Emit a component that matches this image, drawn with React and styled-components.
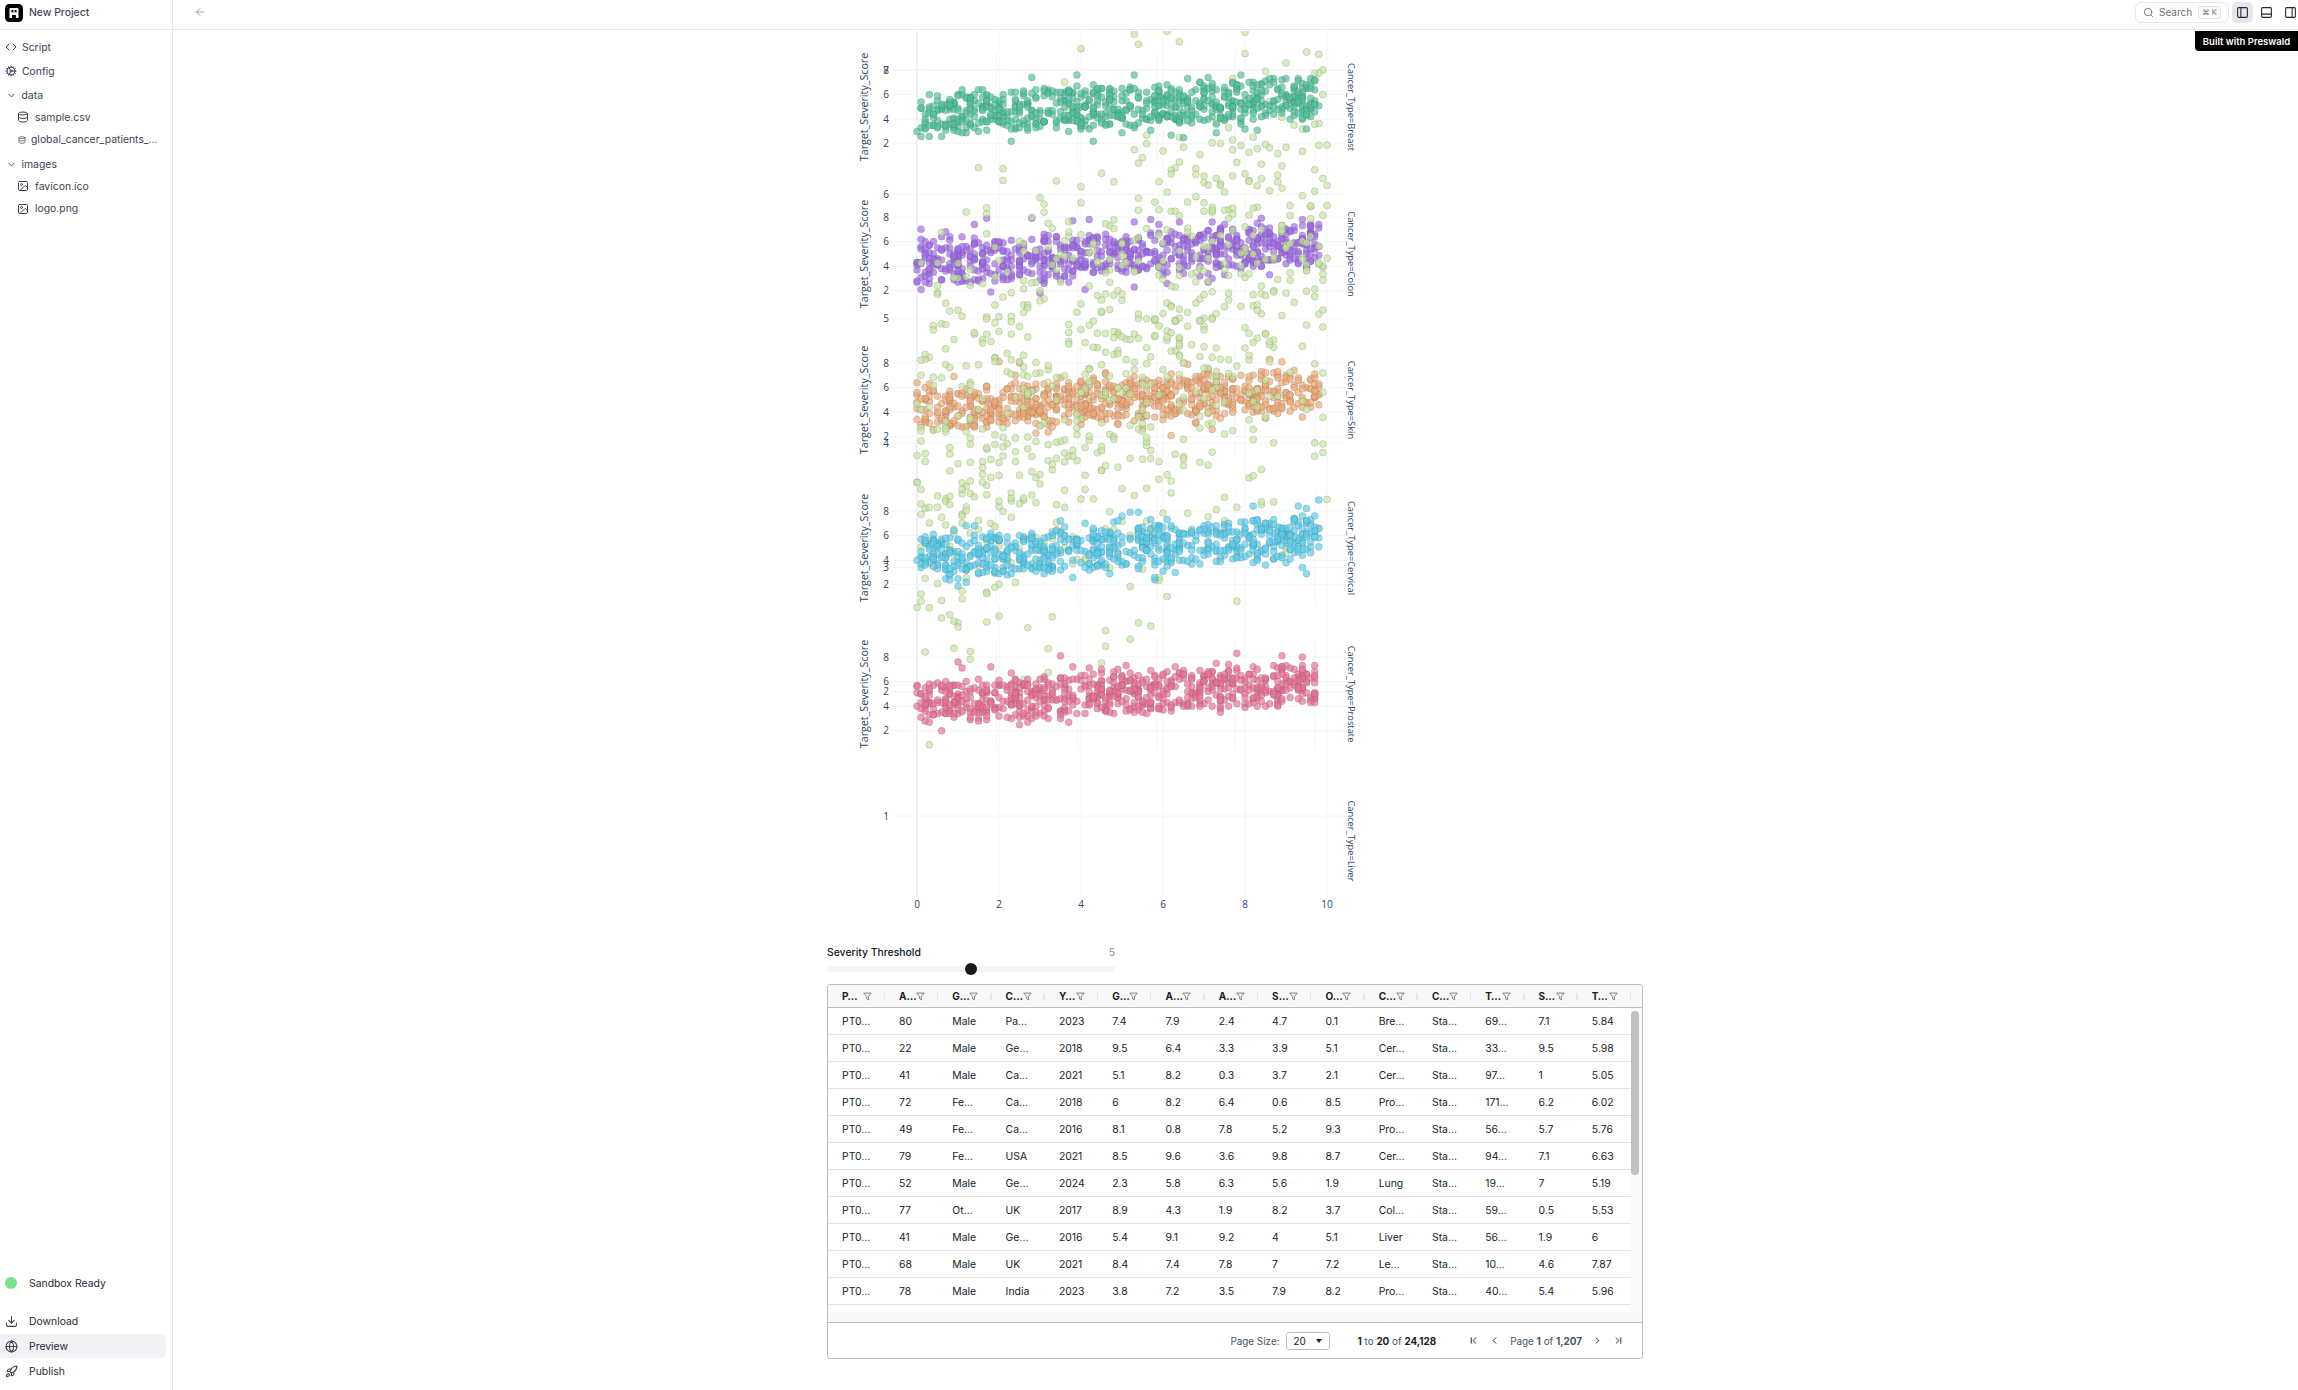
import React, { useMemo } from 'react';
import styled, { createGlobalStyle } from 'styled-components';
import {
  ArrowLeft,
  ChevronDown,
  ChevronFirst,
  ChevronLast,
  ChevronLeft,
  ChevronRight,
  Code,
  Cog,
  Database,
  Download,
  Globe,
  Image as ImageIcon,
  PanelBottom,
  PanelLeft,
  PanelRight,
  Rocket,
  Search,
} from 'lucide-react';

const FONT = 'Inter, "Liberation Sans", sans-serif';
const PLOT_FONT = '"Open Sans", "Liberation Sans", sans-serif';

const GlobalStyle = createGlobalStyle`
  html, body {
    margin: 0;
    padding: 0;
    background: #fff;
    font-family: ${FONT};
    color: #111827;
  }
`;

// chart --------------------------------------------------------------------

const CHART_TOP = 31;
const CHART_LEFT = 827;
const PANEL_PX = 12.3;
const OVERLAY_PX = 124.3;

const panels = [
  { name: 'Breast', y8: 70, top: 52, color: '#4fc098' },
  { name: 'Colon', y8: 217, top: 198, color: '#a268e6' },
  { name: 'Skin', y8: 363, top: 345, color: '#f3a873' },
  { name: 'Cervical', y8: 511, top: 492, color: '#5ccbeb' },
  { name: 'Prostate', y8: 657, top: 639, color: '#ec6f94' },
];

const px = x => x - CHART_LEFT;
const py = y => y - CHART_TOP;

const makeRandom = seed => {
  let s = seed;
  return () => {
    s = (s + 0x6d2b79f5) | 0;
    let t = Math.imul(s ^ (s >>> 15), 1 | s);
    t = (t + Math.imul(t ^ (t >>> 7), 61 | t)) ^ t;
    return ((t ^ (t >>> 14)) >>> 0) / 4294967296;
  };
};

const gauss = rnd => {
  const u = Math.max(rnd(), 1e-6);
  return Math.sqrt(-2 * Math.log(u)) * Math.cos(2 * Math.PI * rnd());
};

const bandPoints = (panel, index) => {
  const rnd = makeRandom(101 + index * 37);
  const pts = [];
  for (let i = 0; i < 700; i += 1) {
    const x = Math.round(rnd() * 98) / 10;
    // part flat spread, part bell, so the band edges stay loose
    const spread = rnd() < 0.6 ? (rnd() - 0.5) * 3.3 : gauss(rnd) * 1.2;
    let value = 4.2 + x * 0.17 + spread;
    value = Math.round(value * 10) / 10;
    if (value < 1.8 || value > 9) continue;
    pts.push({ cx: 917 + x * 41, cy: panel.y8 + (8 - value) * PANEL_PX });
  }
  return pts;
};

const overlayPoints = () => {
  const rnd = makeRandom(4242);
  const pts = [];
  for (let i = 0; i < 880; i += 1) {
    const x = Math.round(rnd() * 100) / 10;
    const value = 3.8 + x * 0.19 + gauss(rnd) * 1.0;
    if (value < 1.55 || value > 7.33) continue;
    pts.push({ cx: 917 + x * 41, cy: 816 - (value - 1) * OVERLAY_PX });
  }
  return pts;
};

const ChartWrap = styled.div`
  width: 550px;
  height: 900px;
  margin-bottom: 14px;
`;

const PlotSvg = styled.svg`
  display: block;
`;

const TickText = styled.text`
  font-family: ${PLOT_FONT};
  font-size: 10px;
  fill: #2a3f5f;
`;

const AxisTitle = styled.text`
  font-family: ${PLOT_FONT};
  font-size: 10.7px;
  fill: #2a3f5f;
`;

const FacetTitle = styled.text`
  font-family: ${PLOT_FONT};
  font-size: 9.3px;
  fill: #2a3f5f;
`;

const Dots = ({ points, color }) => (
  <g>
    {points.map((p, i) => (
      <circle
        key={i}
        cx={px(p.cx)}
        cy={py(p.cy)}
        r="3.5"
        fill={color}
        fillOpacity="0.68"
        stroke="#2f4f4f"
        strokeOpacity="0.45"
        strokeWidth="0.4"
      />
    ))}
  </g>
);

const Chart = () => {
  const layers = useMemo(() => {
    const byName = {};
    panels.forEach((p, i) => {
      byName[p.name] = bandPoints(p, i);
    });
    return { byName, overlay: overlayPoints() };
  }, []);

  const colorOf = name => panels.find(p => p.name === name).color;
  const overlayTicks = [7, 6, 5, 4, 3, 2, 1];
  const mainX = [0, 2, 4, 6, 8, 10];
  const panelX = [996, 1078, 1157, 1235, 1315];

  return (
    <ChartWrap>
      <PlotSvg width="550" height="900">
        {/* vertical grid */}
        {mainX.map(v => (
          <line
            key={v}
            x1={px(917 + v * 41)}
            x2={px(917 + v * 41)}
            y1="0"
            y2={py(897)}
            stroke={v === 0 ? '#ebf0f8' : '#f1f4f9'}
            strokeWidth={v === 0 ? 2 : 1}
          />
        ))}
        {panels.map(panel => (
          <g key={panel.name}>
            {panelX.map(x => (
              <line key={x} x1={px(x)} x2={px(x)} y1={py(panel.top)} y2={py(panel.top + 112)} stroke="#f1f4f9" />
            ))}
            {[8, 6, 4, 2].map(t => {
              const y = py(panel.y8 + (8 - t) * PANEL_PX);
              return (
                <g key={t}>
                  <line x1={px(892)} x2={px(1345)} y1={y} y2={y} stroke="#f1f4f9" />
                  <TickText x={px(889)} y={y + 3.5} textAnchor="end">{t}</TickText>
                </g>
              );
            })}
            <AxisTitle
              transform={`translate(${px(868)} ${py(panel.y8 + 37)}) rotate(-90)`}
              textAnchor="middle"
            >
              Target_Severity_Score
            </AxisTitle>
            <FacetTitle
              transform={`translate(${px(1348)} ${py(panel.y8 + 37)}) rotate(90)`}
              textAnchor="middle"
            >
              {`Cancer_Type=${panel.name}`}
            </FacetTitle>
          </g>
        ))}
        {overlayTicks.map(t => {
          const y = py(816 - (t - 1) * OVERLAY_PX);
          return (
            <g key={t}>
              <line x1={px(892)} x2={px(1345)} y1={y} y2={y} stroke="#f1f4f9" />
              <TickText x={px(889)} y={y + 3.5} textAnchor="end">{t}</TickText>
            </g>
          );
        })}
        <FacetTitle
          transform={`translate(${px(1348)} ${py(841)}) rotate(90)`}
          textAnchor="middle"
        >
          Cancer_Type=Liver
        </FacetTitle>
        {mainX.map(v => (
          <TickText key={v} x={px(917 + v * 41)} y={py(908)} textAnchor="middle">{v}</TickText>
        ))}

        <Dots points={layers.byName.Skin} color={colorOf('Skin')} />
        <Dots points={layers.byName.Colon} color={colorOf('Colon')} />
        <Dots points={layers.overlay} color="#c9e59c" />
        <Dots points={layers.byName.Cervical} color={colorOf('Cervical')} />
        <Dots points={layers.byName.Prostate} color={colorOf('Prostate')} />
        <Dots points={layers.byName.Breast} color={colorOf('Breast')} />
      </PlotSvg>
    </ChartWrap>
  );
};

// table data ---------------------------------------------------------------

const headers = ['P…', 'A…', 'G…', 'C…', 'Y…', 'G…', 'A…', 'A…', 'S…', 'O…', 'C…', 'C…', 'T…', 'S…', 'T…'];

const rows = [
  ['PT0…', '80', 'Male', 'Pa…', '2023', '7.4', '7.9', '2.4', '4.7', '0.1', 'Bre…', 'Sta…', '69…', '7.1', '5.84'],
  ['PT0…', '22', 'Male', 'Ge…', '2018', '9.5', '6.4', '3.3', '3.9', '5.1', 'Cer…', 'Sta…', '33…', '9.5', '5.98'],
  ['PT0…', '41', 'Male', 'Ca…', '2021', '5.1', '8.2', '0.3', '3.7', '2.1', 'Cer…', 'Sta…', '97…', '1', '5.05'],
  ['PT0…', '72', 'Fe…', 'Ca…', '2018', '6', '8.2', '6.4', '0.6', '8.5', 'Pro…', 'Sta…', '171…', '6.2', '6.02'],
  ['PT0…', '49', 'Fe…', 'Ca…', '2016', '8.1', '0.8', '7.8', '5.2', '9.3', 'Pro…', 'Sta…', '56…', '5.7', '5.76'],
  ['PT0…', '79', 'Fe…', 'USA', '2021', '8.5', '9.6', '3.6', '9.8', '8.7', 'Cer…', 'Sta…', '94…', '7.1', '6.63'],
  ['PT0…', '52', 'Male', 'Ge…', '2024', '2.3', '5.8', '6.3', '5.6', '1.9', 'Lung', 'Sta…', '19…', '7', '5.19'],
  ['PT0…', '77', 'Ot…', 'UK', '2017', '8.9', '4.3', '1.9', '8.2', '3.7', 'Col…', 'Sta…', '59…', '0.5', '5.53'],
  ['PT0…', '41', 'Male', 'Ge…', '2016', '5.4', '9.1', '9.2', '4', '5.1', 'Liver', 'Sta…', '56…', '1.9', '6'],
  ['PT0…', '68', 'Male', 'UK', '2021', '8.4', '7.4', '7.8', '7', '7.2', 'Le…', 'Sta…', '10…', '4.6', '7.87'],
  ['PT0…', '78', 'Male', 'India', '2023', '3.8', '7.2', '3.5', '7.9', '8.2', 'Pro…', 'Sta…', '40…', '5.4', '5.96'],
];

const COLUMNS = '57px repeat(14, 53.3px)';

// layout -------------------------------------------------------------------

const Page = styled.div`
  display: flex;
  width: 2298px;
  height: 1390px;
  overflow: hidden;
  position: relative;
`;

const Sidebar = styled.aside`
  flex: none;
  width: 172px;
  height: 100%;
  border-right: 1px solid #e5e7eb;
  display: flex;
  flex-direction: column;
  font-size: 10.4px;
`;

const Brand = styled.div`
  height: 30px;
  flex: none;
  display: flex;
  align-items: center;
  gap: 6px;
  padding: 0 5px 4px;
  box-sizing: border-box;
  border-bottom: 1px solid #e5e7eb;
  color: #3f4a5f;
  font-weight: 500;
`;

const Tree = styled.nav`
  padding-top: 5px;
`;

const TreeRow = styled.div`
  height: ${({ $h }) => $h || 24}px;
  display: flex;
  align-items: center;
  gap: ${({ $gap }) => $gap ?? 5}px;
  padding-left: ${({ $indent }) => $indent || 5}px;
  color: #3a4253;
  white-space: nowrap;
  svg {
    flex: none;
  }
`;

const SidebarFoot = styled.div`
  margin-top: auto;
  padding-bottom: 7px;
`;

const Status = styled.div`
  display: flex;
  align-items: center;
  gap: 12px;
  padding-left: 5px;
  height: 24px;
  margin-bottom: 14px;
  color: #1f2937;
`;

const StatusDot = styled.span`
  width: 12px;
  height: 12px;
  border-radius: 50%;
  background: #7de08a;
`;

const FootRow = styled.div`
  display: flex;
  align-items: center;
  gap: 11px;
  width: 166px;
  height: 24px;
  margin-top: 1px;
  padding-left: 5px;
  box-sizing: border-box;
  border-radius: 0 6px 6px 0;
  color: #1f2937;
  background: ${({ $active }) => ($active ? '#f1f2f5' : 'transparent')};
  svg {
    flex: none;
    color: #374151;
  }
`;

const Main = styled.main`
  flex: 1;
  min-width: 0;
  display: flex;
  flex-direction: column;
`;

const TopBar = styled.header`
  flex: none;
  height: 30px;
  box-sizing: border-box;
  border-bottom: 1px solid #e5e7eb;
  display: flex;
  align-items: center;
  justify-content: space-between;
  padding: 0 0 5px 21px;
`;

const TopActions = styled.div`
  display: flex;
  align-items: center;
  gap: 3px;
  margin-right: -3px;
`;

const SearchBox = styled.div`
  width: 94px;
  height: 21px;
  box-sizing: border-box;
  border: 1px solid #e5e7eb;
  border-radius: 6px;
  display: flex;
  align-items: center;
  gap: 5px;
  padding-left: 7px;
  font-size: 10px;
  color: #6b7280;
`;

const Kbd = styled.span`
  margin-left: 1px;
  padding: 1px 3px;
  border: 1px solid #e5e7eb;
  border-radius: 3px;
  background: #f9fafb;
  font-size: 7.5px;
  color: #6b7280;
`;

const PanelButton = styled.button`
  width: 21px;
  height: 21px;
  padding: 0;
  border: none;
  border-radius: 5px;
  display: flex;
  align-items: center;
  justify-content: center;
  color: #1f2937;
  background: ${({ $active }) => ($active ? '#e5e7eb' : 'transparent')};
`;

const Badge = styled.div`
  position: absolute;
  top: 31px;
  right: 0;
  width: 103px;
  height: 20px;
  display: flex;
  align-items: center;
  justify-content: center;
  border-bottom-left-radius: 4px;
  background: #000;
  color: #fff;
  font-size: 9.5px;
  font-weight: 600;
`;

const Content = styled.div`
  width: 816px;
  margin-left: 654px;
  padding-top: 1px;
`;

const SliderHead = styled.div`
  width: 288px;
  display: flex;
  justify-content: space-between;
  align-items: center;
  height: 14px;
  font-size: 10.4px;
`;

const SliderLabel = styled.span`
  font-weight: 500;
  color: #111827;
`;

const SliderValue = styled.span`
  color: #8b8f97;
`;

const SliderTrack = styled.div`
  position: relative;
  width: 288px;
  height: 6px;
  margin: 7px 0 12px;
  border-radius: 3px;
  background: #f3f4f6;
`;

const SliderThumb = styled.span`
  position: absolute;
  top: -3px;
  left: 138px;
  width: 12px;
  height: 12px;
  border-radius: 50%;
  background: #17181c;
`;

const Grid = styled.div`
  position: relative;
  width: 816px;
  height: 375px;
  box-sizing: border-box;
  border: 1px solid #babfc7;
  border-radius: 3px;
  display: flex;
  flex-direction: column;
  font-size: 10.4px;
  color: #181d1f;
`;

const HeadRow = styled.div`
  flex: none;
  height: 22px;
  display: grid;
  grid-template-columns: ${COLUMNS};
  border-bottom: 1px solid #babfc7;
  background: #f8f8f8;
  border-radius: 3px 3px 0 0;
`;

const HeadCell = styled.div`
  position: relative;
  display: flex;
  align-items: center;
  gap: 2px;
  padding-left: 14px;
  font-size: 10px;
  font-weight: 700;
  color: #181d1f;
  &::after {
    content: '';
    position: absolute;
    right: 0;
    top: 8px;
    width: 1.5px;
    height: 7px;
    background: #e3e6ec;
  }
`;

const HeadLabel = styled.span`
  flex: none;
  width: ${({ $w }) => $w}px;
  white-space: nowrap;
`;

const Body = styled.div`
  position: relative;
  flex: 1;
  min-height: 0;
  background: linear-gradient(#fff, #fff) top / 100% 304px no-repeat, #f8f8f8;
`;

const BodyRow = styled.div`
  height: 27px;
  box-sizing: border-box;
  width: 803px;
  display: grid;
  grid-template-columns: ${COLUMNS};
  align-items: center;
  border-bottom: 1px solid #dde2eb;
`;

const Cell = styled.div`
  padding-left: 14px;
  white-space: nowrap;
`;

const ScrollTrack = styled.div`
  position: absolute;
  top: 0;
  right: 0;
  width: 11px;
  height: 304px;
  background: #fafafa;
`;

const ScrollThumb = styled.div`
  position: absolute;
  top: 3px;
  left: 0;
  width: 8px;
  height: 164px;
  border-radius: 4px;
  background: #c1c1c1;
`;

const Footer = styled.div`
  flex: none;
  height: 36px;
  box-sizing: border-box;
  border-top: 1px solid #babfc7;
  display: flex;
  align-items: center;
  justify-content: flex-end;
  padding-right: 18px;
  font-size: 9.9px;
  color: #4b5563;
`;

const SizeSelect = styled.div`
  width: 44px;
  height: 18px;
  box-sizing: border-box;
  margin: 0 28px 0 6px;
  padding: 0 7px;
  border: 1px solid #babfc7;
  border-radius: 3px;
  display: flex;
  align-items: center;
  justify-content: space-between;
  color: #181d1f;
`;

const Caret = styled.span`
  width: 0;
  height: 0;
  border-left: 3.5px solid transparent;
  border-right: 3.5px solid transparent;
  border-top: 4px solid #181d1f;
`;

const Summary = styled.div`
  margin-right: 32px;
  b {
    font-weight: 700;
    color: #181d1f;
  }
`;

const Pager = styled.div`
  display: flex;
  align-items: center;
  gap: 10px;
  color: #181d1f;
  svg {
    flex: none;
  }
  b {
    font-weight: 700;
  }
`;

const PageLabel = styled.span`
  color: #4b5563;
`;

const FilterIcon = () => (
  <svg width="9" height="9" viewBox="0 0 10 10" fill="none" stroke="#68686e" strokeWidth="0.9">
    <path d="M0.8 1.2h8.4L6 5v3.8L4 7.6V5z" strokeLinejoin="round" />
  </svg>
);

const Logo = () => (
  <svg width="18" height="18" viewBox="0 0 18 18">
    <rect width="18" height="18" rx="4.5" fill="#000" />
    <path d="M4.5 14V5.2C4.5 4.5 5 4 5.7 4h6.6c.7 0 1.2.5 1.2 1.2V14h-2.6v-3H7.1v3z" fill="#fff" />
    <rect x="6.4" y="6" width="2" height="2.4" fill="#000" />
    <rect x="9.6" y="6" width="2" height="2.4" fill="#000" />
  </svg>
);

const App = () => (
  <Page>
    <GlobalStyle />
    <Sidebar>
      <Brand>
        <Logo />
        New Project
      </Brand>
      <Tree>
        <TreeRow><Code size={12} />Script</TreeRow>
        <TreeRow><Cog size={12} />Config</TreeRow>
        <TreeRow><ChevronDown size={11} style={{ marginLeft: 0.5 }} />data</TreeRow>
        <TreeRow $h={20} $indent={17} $gap={6}><Database size={12} />sample.csv</TreeRow>
        <TreeRow $h={25} $indent={18} $gap={5}><Database size={8} />global_cancer_patients_…</TreeRow>
        <TreeRow><ChevronDown size={11} style={{ marginLeft: 0.5 }} />images</TreeRow>
        <TreeRow $h={20} $indent={17} $gap={6}><ImageIcon size={12} />favicon.ico</TreeRow>
        <TreeRow $h={25} $indent={17} $gap={6}><ImageIcon size={12} />logo.png</TreeRow>
      </Tree>
      <SidebarFoot>
        <Status><StatusDot />Sandbox Ready</Status>
        <FootRow><Download size={13} />Download</FootRow>
        <FootRow $active><Globe size={13} />Preview</FootRow>
        <FootRow><Rocket size={13} />Publish</FootRow>
      </SidebarFoot>
    </Sidebar>
    <Main>
      <TopBar>
        <ArrowLeft size={12} color="#9ca3af" />
        <TopActions>
          <SearchBox>
            <Search size={11} color="#6b7280" />
            Search
            <Kbd>⌘ K</Kbd>
          </SearchBox>
          <PanelButton $active><PanelLeft size={13} /></PanelButton>
          <PanelButton><PanelBottom size={13} /></PanelButton>
          <PanelButton><PanelRight size={13} /></PanelButton>
        </TopActions>
      </TopBar>
      <Content>
        <Chart />
        <SliderHead>
          <SliderLabel>Severity Threshold</SliderLabel>
          <SliderValue>5</SliderValue>
        </SliderHead>
        <SliderTrack><SliderThumb /></SliderTrack>
        <Grid>
          <HeadRow>
            {headers.map((h, i) => (
              <HeadCell key={i}>
                <HeadLabel $w={i === 0 ? 19 : 15}>{h}</HeadLabel>
                <FilterIcon />
              </HeadCell>
            ))}
          </HeadRow>
          <Body>
            {rows.map((row, r) => (
              <BodyRow key={r}>
                {row.map((c, i) => <Cell key={i}>{c}</Cell>)}
              </BodyRow>
            ))}
            <ScrollTrack><ScrollThumb /></ScrollTrack>
          </Body>
          <Footer>
            Page Size:
            <SizeSelect>20<Caret /></SizeSelect>
            <Summary><b>1</b> to <b>20</b> of <b>24,128</b></Summary>
            <Pager>
              <ChevronFirst size={11} />
              <ChevronLeft size={11} />
              <PageLabel>Page <b>1</b> of <b>1,207</b></PageLabel>
              <ChevronRight size={11} />
              <ChevronLast size={11} />
            </Pager>
          </Footer>
        </Grid>
      </Content>
    </Main>
    <Badge>Built with Preswald</Badge>
  </Page>
);

export default App;
